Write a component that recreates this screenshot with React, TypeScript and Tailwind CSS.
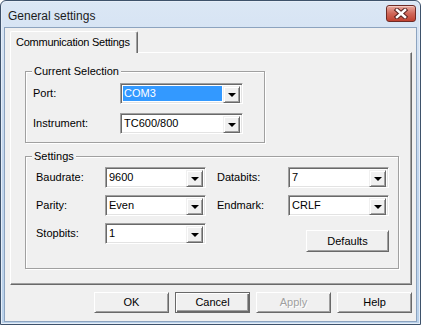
const font = { fontFamily: '"Liberation Sans", Arial, sans-serif' };

function Arrow() {
  return (
    <span className="block w-0 h-0 border-l-[4px] border-r-[4px] border-t-[4px] border-l-transparent border-r-transparent border-t-black" />
  );
}

function Combo({ value, width, selected }: { value: string; width: string; selected?: boolean }) {
  return (
    <div
      className={`${width} h-[21px] flex bg-white border-t border-l border-t-[#a0a0a0] border-l-[#a0a0a0] border-b border-r border-b-white border-r-white shadow-[inset_1px_1px_0_#696969,inset_-1px_-1px_0_#e3e3e3] p-[1px]`}
    >
      <div className="flex-1 flex p-[1px] min-w-0">
        <div
          className={`flex-1 flex items-center pl-[1px] ${selected ? 'bg-[#3399ff] text-white' : 'text-black'}`}
        >
          {value}
        </div>
      </div>
      <div className="w-[17px] h-[17px] mt-[1px] mr-[1px] flex items-center justify-center bg-[#f0f0f0] border-t border-l border-t-[#f0f0f0] border-l-[#f0f0f0] border-b border-r border-b-[#696969] border-r-[#696969] shadow-[inset_1px_1px_0_white,inset_-1px_-1px_0_#a0a0a0]">
        <Arrow />
      </div>
    </div>
  );
}

function Button({ label, width, isDefault, disabled }: { label: string; width: string; isDefault?: boolean; disabled?: boolean }) {
  return (
    <div
      className={`${width} flex items-center justify-center bg-[#f0f0f0] ${
        isDefault
          ? 'border border-[#696969] shadow-[inset_1px_1px_0_white,inset_-1px_-1px_0_#696969,inset_-2px_-2px_0_#a0a0a0]'
          : 'border-t border-l border-t-white border-l-white border-b border-r border-b-[#696969] border-r-[#696969] shadow-[inset_1px_1px_0_#f0f0f0,inset_-1px_-1px_0_#a0a0a0]'
      } ${disabled ? 'text-[#a0a0a0] [text-shadow:1px_1px_0_white]' : 'text-black'}`}
    >
      {label}
    </div>
  );
}

function Group({ title, className, children }: { title: string; className: string; children: React.ReactNode }) {
  return (
    <div className={`relative border border-[#a0a0a0] shadow-[inset_1px_1px_0_white,1px_1px_0_white] ${className}`}>
      <span className="absolute left-[6px] top-[-8px] px-[2px] bg-[#f0f0f0] leading-[14px]">{title}</span>
      {children}
    </div>
  );
}

function CloseButton() {
  return (
    <div className="w-[30px] h-[17px] rounded-[3px] border border-[#6e2b26] bg-gradient-to-b from-[#e8a99f] via-[#d0685a] to-[#c0412f] flex items-center justify-center shadow-[inset_0_1px_0_#f3c9c1]">
      <svg width="16" height="11" viewBox="0 0 16 11">
        <path d="M4 2 L12 9 M12 2 L4 9" stroke="#5a2320" strokeWidth="4.5" strokeLinecap="square" />
        <path d="M4 2 L12 9 M12 2 L4 9" stroke="white" strokeWidth="2.5" strokeLinecap="square" />
      </svg>
    </div>
  );
}

export default function App() {
  return (
    <div style={font} className="w-[421px] h-[325px] text-[11px] text-black">
      <div className="w-full h-full flex flex-col rounded-t-[6px] border border-[#3e526b] bg-gradient-to-b from-[#dbe7f5] via-[#c2d6ee] to-[#b9d1ea] shadow-[inset_0_0_0_1px_#e6eef8]">
        {/* Title bar */}
        <div className="h-[26px] flex items-start justify-between pl-[7px] pr-[4px]">
          <span className="mt-[6px] text-[12px] text-[#1b1b1b]">General settings</span>
          <div className="mt-[4px]">
            <CloseButton />
          </div>
        </div>

        {/* Client */}
        <div className="mx-[3px] h-[295px] bg-[#f0f0f0] border border-[#8ca3bf] flex flex-col">
          {/* Tab strip */}
          <div className="flex pl-[5px] pt-[3px]">
            <div className="relative z-10 -mb-px w-[128px] h-[22px] flex items-center pl-[5px] whitespace-nowrap tracking-[-0.25px] bg-[#f0f0f0] border-t border-l border-t-white border-l-white border-r border-r-[#696969] shadow-[inset_-1px_0_0_#a0a0a0] rounded-t-[2px]">
              Communication Settings
            </div>
          </div>

          {/* Panel */}
          <div className="ml-[5px] w-[402px] h-[233px] flex flex-col border-t border-l border-t-white border-l-white border-b border-r border-b-[#696969] border-r-[#696969] shadow-[inset_-1px_-1px_0_#a0a0a0]">
            <Group title="Current Selection" className="ml-[14px] mt-[18px] w-[240px] h-[72px] pl-[7px] pt-[11px] flex flex-col gap-[9px]">
              <div className="flex items-center">
                <span className="w-[87px]">Port:</span>
                <Combo value="COM3" width="w-[123px]" selected />
              </div>
              <div className="flex items-center">
                <span className="w-[87px]">Instrument:</span>
                <Combo value="TC600/800" width="w-[123px]" />
              </div>
            </Group>

            <Group title="Settings" className="ml-[14px] mt-[13px] w-[374px] h-[113px] pl-[10px] pt-[10px] flex flex-col gap-[7px]">
              <div className="flex items-center">
                <span className="w-[69px]">Baudrate:</span>
                <Combo value="9600" width="w-[101px]" />
                <span className="ml-[11px] w-[71px]">Databits:</span>
                <Combo value="7" width="w-[101px]" />
              </div>
              <div className="flex items-center">
                <span className="w-[69px]">Parity:</span>
                <Combo value="Even" width="w-[101px]" />
                <span className="ml-[11px] w-[71px]">Endmark:</span>
                <Combo value="CRLF" width="w-[101px]" />
              </div>
              <div className="flex items-start">
                <div className="flex items-center">
                  <span className="w-[69px]">Stopbits:</span>
                  <Combo value="1" width="w-[101px]" />
                </div>
                <div className="ml-[100px] mt-[7px] h-[22px] flex">
                  <Button label="Defaults" width="w-[83px]" />
                </div>
              </div>
            </Group>
          </div>

          {/* Dialog buttons */}
          <div className="mt-[7px] h-[21px] flex justify-end gap-[6px] pr-[4px]">
            <Button label="OK" width="w-[75px]" />
            <Button label="Cancel" width="w-[75px]" isDefault />
            <Button label="Apply" width="w-[75px]" disabled />
            <Button label="Help" width="w-[75px]" />
          </div>
        </div>
      </div>
    </div>
  );
}
